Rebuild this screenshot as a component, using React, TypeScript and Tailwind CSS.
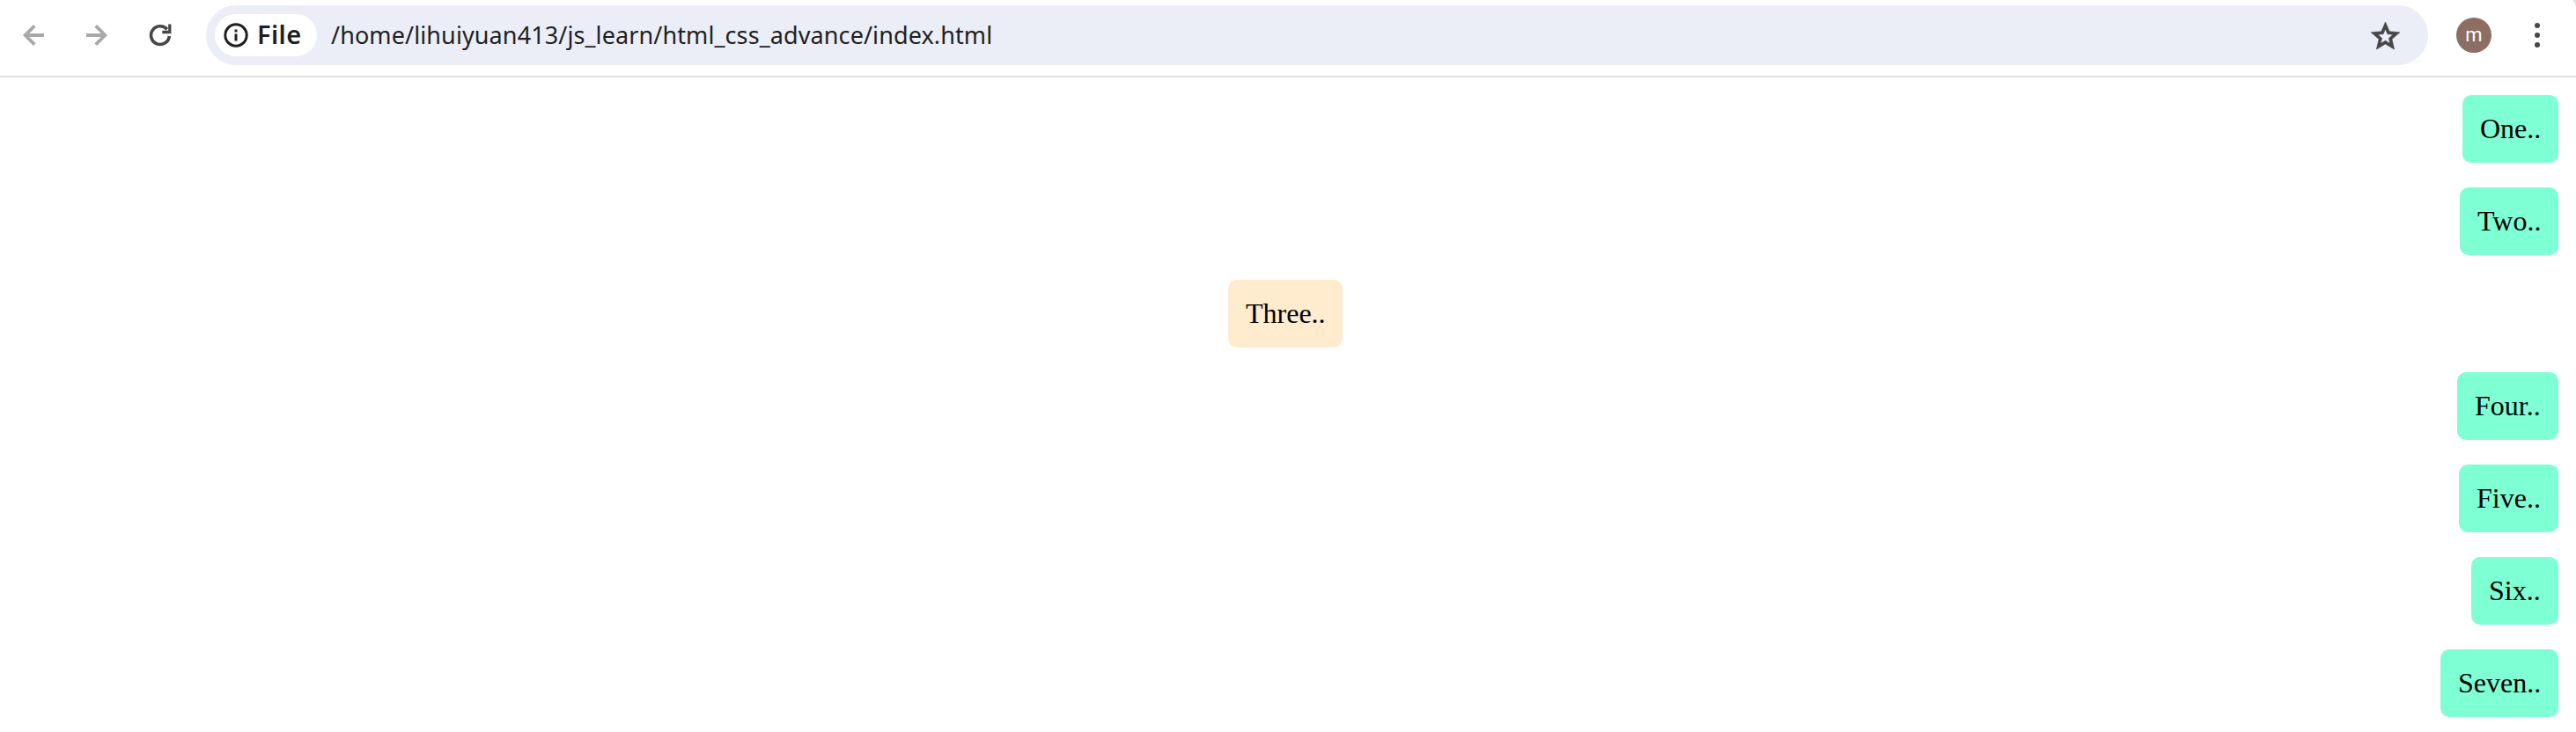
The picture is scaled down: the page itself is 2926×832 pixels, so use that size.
const items = [
  { text: 'One..', w: 'w-[109px]' },
  { text: 'Two..', w: 'w-[112px]' },
  { text: 'Three..', w: 'w-[130px]', center: true },
  { text: 'Four..', w: 'w-[115px]' },
  { text: 'Five..', w: 'w-[113px]' },
  { text: 'Six..', w: 'w-[99px]' },
  { text: 'Seven..', w: 'w-[134px]' },
];

function Toolbar() {
  return (
    <header className="relative flex h-[88px] items-start border-b-2 border-[#e0e0e0] bg-white pt-1.5">
      <div className="flex h-[68px] w-[234px] shrink-0 items-center pl-[26px]">
        <svg className="size-6" viewBox="0 0 24 24" fill="none" stroke="#a8a8a8" strokeWidth="3.8">
          <path d="M24 12H3M13.3 1.3 2.6 12l10.700 10.700" />
        </svg>
        <svg className="ml-12 size-6" viewBox="0 0 24 24" fill="none" stroke="#a8a8a8" strokeWidth="3.8">
          <path d="M0 12h21M10.700 1.3 21.400 12 10.700 22.700" />
        </svg>
        <svg className="ml-[47px] h-6 w-[26px] overflow-visible" viewBox="0 0 26 24" fill="none" stroke="#474747" strokeWidth="3.6">
          <path d="M23.300 13A10.400 10.400 0 1 1 20.800 5.300" />
          <path d="M23.800 -0.500v9H15.300" strokeWidth="3.3" />
        </svg>
      </div>
      <div className="flex h-[68px] w-[2524px] shrink-0 items-center rounded-full bg-[#ebeef7] pr-8 pl-2.5">
        <div className="flex h-12 w-[116px] items-center rounded-full bg-white pl-2.5">
          <svg className="size-7" viewBox="0 0 28 28" fill="none" stroke="#1f1f1f" strokeWidth="3">
            <circle cx="14" cy="14" r="12.2" />
            <path d="M14 12.500v8M14 7.500v3" />
          </svg>
          <span className="ml-2.5 pb-0.5 font-['Noto_Sans',sans-serif] text-[29px] leading-8 font-semibold tracking-[0.4px] text-[#1f1f1f]">
            File
          </span>
        </div>
        <span className="ml-4 pb-px font-['Noto_Sans',sans-serif] text-[27px] leading-8 tracking-[0.1px] whitespace-nowrap text-[#1f1f1f]">
          /home/lihuiyuan413/js_learn/html_css_advance/index.html
        </span>
        <svg
          className="ml-auto h-[31px] w-[33px] overflow-visible"
          viewBox="2 2 20 19"
          fill="#474747"
          stroke="#474747"
          strokeWidth="0.4"
        >
          <path
            fillRule="evenodd"
            d="M22 9.240 14.810 8.620 12 2 9.190 8.630 2 9.240 7.460 13.970 5.820 21 12 17.270 18.180 21 16.550 13.970zM12 6.900 13.500 10.400 17.300 10.750 14.400 13.300 15.300 17 12 15 8.700 17 9.600 13.300 6.700 10.750 10.500 10.400z"
          />
        </svg>
      </div>
      <div className="flex h-[68px] flex-1 items-center">
        <div className="ml-8 flex size-10 items-center justify-center rounded-full bg-[#8d6e63] pb-0.5 font-['Roboto',sans-serif] text-[22px] text-white">
          m
        </div>
        <svg className="ml-[49px] h-7 w-1.5" viewBox="0 0 6 28" fill="#474747">
          <circle cx="3" cy="3" r="3" />
          <circle cx="3" cy="14" r="3" />
          <circle cx="3" cy="25" r="3" />
        </svg>
      </div>
      <svg className="absolute top-0 right-0 h-2 w-1" viewBox="0 0 4 8" fill="#d3e3fd">
        <path d="M.5 0H4v8Q3 3 .5 0z" />
      </svg>
    </header>
  );
}

export default function App() {
  return (
    <div className="h-[832px] overflow-hidden bg-white">
      <Toolbar />
      <main className="flex flex-col items-end gap-7 px-5 pt-5">
        {items.map(({ text, w, center }) => (
          <div
            key={text}
            className={`h-[77px] shrink-0 rounded-[10px] p-5 font-['Liberation_Serif',serif] text-[32px] leading-[37px] whitespace-nowrap text-black ${w} ${
              center ? 'mr-[1381px] bg-[#ffebcd]' : 'bg-[#7fffd4]'
            }`}
          >
            {text}
          </div>
        ))}
      </main>
    </div>
  );
}
